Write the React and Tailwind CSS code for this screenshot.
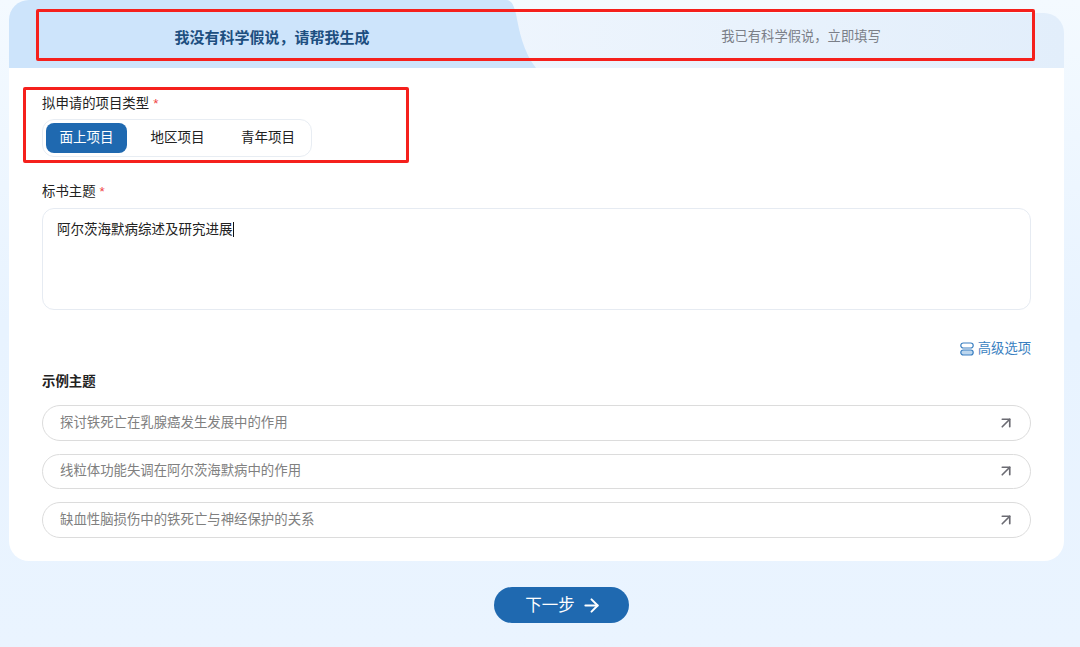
import { ArrowRight, ArrowUpRight } from 'lucide-react';

const EXAMPLES = [
  '探讨铁死亡在乳腺癌发生发展中的作用',
  '线粒体功能失调在阿尔茨海默病中的作用',
  '缺血性脑损伤中的铁死亡与神经保护的关系',
];

function Required() {
  return <span className="ml-1 text-[#ef4444]">*</span>;
}

export default function App() {
  return (
    <div
      className="relative h-[647px] w-[1080px] overflow-hidden bg-gradient-to-b from-[#f4faff] via-[#e8f3ff] to-[#eaf4ff] text-[13.4px] text-[#222]"
      style={{ fontFamily: '"Liberation Sans", "Noto Sans CJK SC", sans-serif' }}
    >
      {/* Card */}
      <div className="ml-[9px] w-[1055px] overflow-hidden rounded-b-[20px] rounded-tl-[20px] rounded-tr-[20px]">
        {/* Tabs */}
        <div className="flex h-[68px]">
          <div className="relative z-10 flex w-[491px] items-center justify-center bg-[#cde4fb] pl-[35px] pt-[8px] text-[15px] font-bold text-[#1d4f80]">
            我没有科学假说，请帮我生成
            <svg className="absolute left-full top-0" width="36" height="68" viewBox="0 0 36 68">
              <path d="M0 0 H6 C12 0 14 6 16 14 C19 30 23 52 36 68 H0 Z" fill="#cde4fb" />
            </svg>
          </div>
          <div className="mt-[13px] flex flex-1 items-center justify-center rounded-tr-[20px] bg-gradient-to-r from-[#eef5fd] to-[#e2eefb] pb-[7px] pl-[38px] text-[13.3px] text-[#7b7f88]">
            我已有科学假说，立即填写
          </div>
        </div>

        {/* Form */}
        <div className="bg-white px-[33px] pb-[23px] pt-[26px]">
          <div className="h-[20px] leading-[20px]">
            拟申请的项目类型
            <Required />
          </div>
          <div className="mt-[5px] flex h-[38px] w-[270px] items-center rounded-[12px] border border-[#e8edf3] pl-[3px]">
            <div className="flex h-[30px] w-[81px] items-center justify-center rounded-[8px] bg-[#1f69b0] text-[13.5px] text-white">
              面上项目
            </div>
            <div className="flex h-[30px] w-[101px] items-center justify-center text-[13.5px] text-[#222]">
              地区项目
            </div>
            <div className="flex h-[30px] w-[80px] items-center justify-center text-[13.5px] text-[#222]">
              青年项目
            </div>
          </div>

          <div className="mt-[25px] h-[20px] leading-[20px]">
            标书主题
            <Required />
          </div>
          <div className="mt-[6px] h-[102px] rounded-[12px] border border-[#e6ebf2] px-[14px] py-[11px] text-[13.5px] leading-[20px]">
            <span className="border-r border-[#111]">阿尔茨海默病综述及研究进展</span>
          </div>

          <div className="mt-[29px] flex h-[20px] items-center justify-end gap-[4px] text-[13.3px] text-[#3a7fc1]">
            <svg width="14" height="14" viewBox="0 0 14 14" fill="none" stroke="#3a7fc1" strokeWidth="1.2">
              <rect x="0.8" y="1" width="12.4" height="5" rx="2.5" />
              <rect x="0.8" y="8" width="12.4" height="5" rx="2.5" fill="#bcd6ee" />
            </svg>
            高级选项
          </div>

          <div className="mt-[13px] h-[20px] font-bold leading-[20px]">示例主题</div>

          <div className="mt-[13px] flex flex-col gap-[13px]">
            {EXAMPLES.map((text) => (
              <div
                key={text}
                className="flex h-[35.5px] items-center justify-between rounded-full border-[1.5px] border-[#dcdcdc] pl-[17px] pr-[15.5px] text-[#808080]"
              >
                {text}
                <ArrowUpRight size={18} strokeWidth={2.2} className="text-[#6b6b72]" />
              </div>
            ))}
          </div>
        </div>
      </div>

      {/* Next button */}
      <div className="mt-[26.5px] flex justify-center pl-[43px]">
        <button className="flex h-[36px] w-[135px] items-center justify-center gap-[6px] rounded-full bg-[#1f69b0] pl-[4px] pt-px text-[16.5px] text-white">
          下一步
          <ArrowRight size={21} strokeWidth={2.3} />
        </button>
      </div>

      {/* Red annotation boxes drawn over the screenshot */}
      <div className="pointer-events-none absolute left-[36px] top-[9px] z-20 h-[52px] w-[999px] rounded-[2px] border-[3px] border-[#f5201c]" />
      <div className="pointer-events-none absolute left-[23px] top-[87px] z-20 h-[76px] w-[386px] rounded-[2px] border-[3px] border-[#f5201c]" />
    </div>
  );
}
